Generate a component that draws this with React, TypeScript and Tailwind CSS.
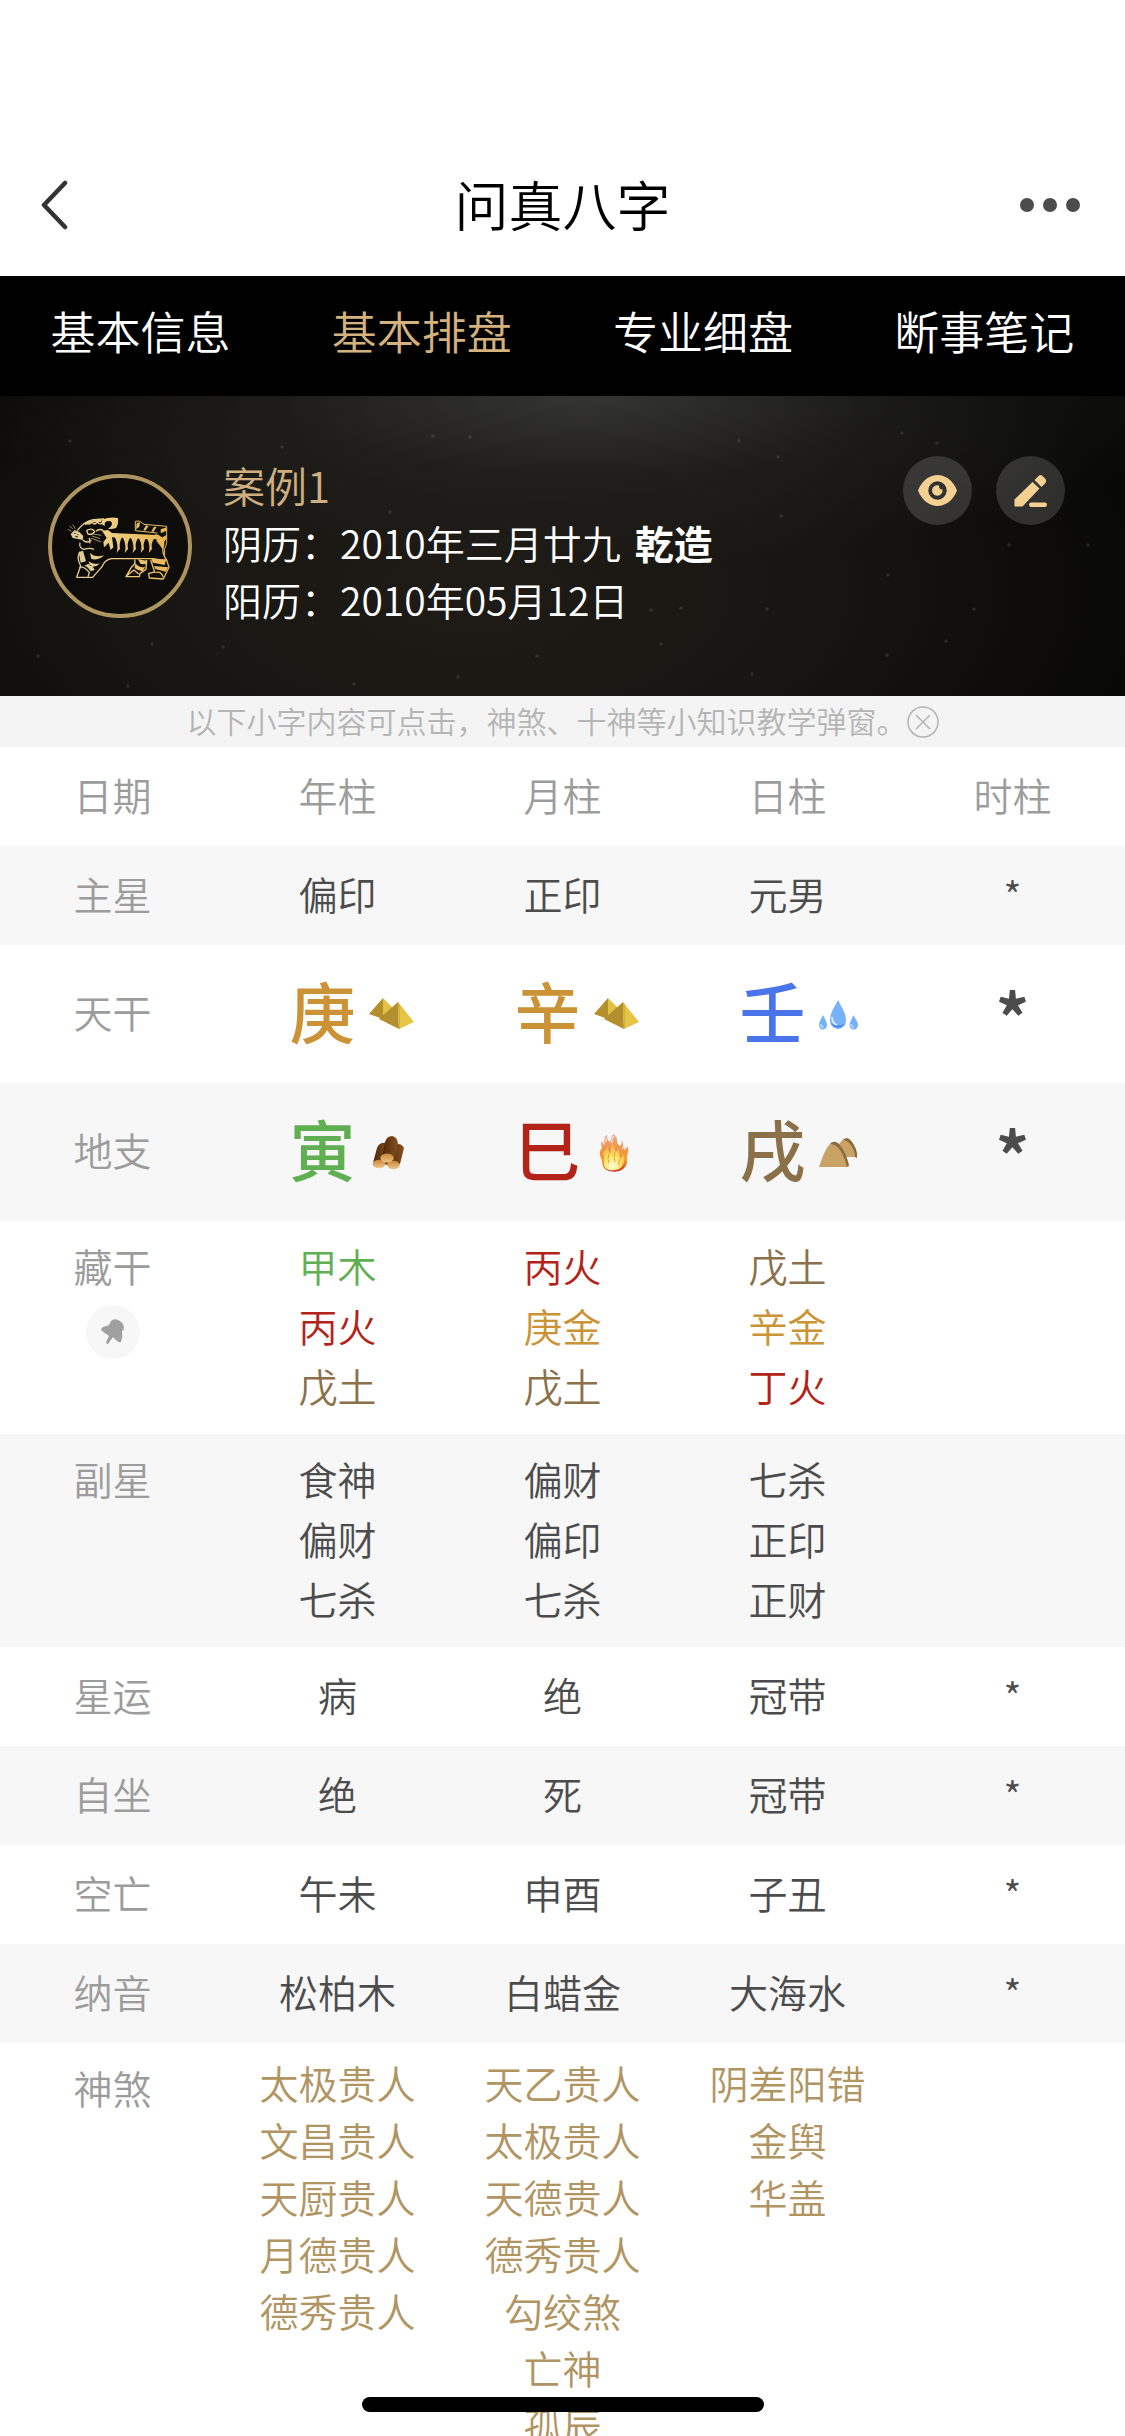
import clsx from "clsx"
import type { ReactNode } from "react"

const tabs = ["基本信息", "基本排盘", "专业细盘", "断事笔记"]

const specks = [
  [70, 441], [282, 447], [433, 436], [470, 437], [778, 457], [902, 433],
  [937, 443], [739, 441], [390, 512], [781, 516], [1009, 545], [1088, 545],
  [888, 575], [651, 610], [681, 608], [767, 609], [38, 656], [152, 644],
  [223, 647], [537, 656], [661, 644], [946, 641], [887, 655], [458, 677],
  [354, 684], [752, 674], [128, 686], [974, 609],
]

const GoldIcon = () => (
  <svg viewBox="0 0 45 45" className="size-[45px]" aria-hidden="true">
    <path d="M0 22 14 6 14 27Z" fill="#b3902d" />
    <path d="M14 6 25 17 17 28 14 27Z" fill="#e4c044" />
    <path d="M10 27 29 10 30 37Z" fill="#b3902d" />
    <path d="M29 10 45 30 30 37Z" fill="#e6c446" />
    <path d="M29 10 31 13 31 36.500 30 37Z" fill="#d2b03c" />
  </svg>
)

const WoodIcon = () => (
  <svg viewBox="0 0 45 45" className="size-[45px]" aria-hidden="true">
    <defs>
      <linearGradient id="bark" x1="0" x2="1">
        <stop offset="0" stopColor="#4d270c" />
        <stop offset="1" stopColor="#87501e" />
      </linearGradient>
      <linearGradient id="cut" x1="0" y1="0" x2="0" y2="1">
        <stop offset="0" stopColor="#c58438" />
        <stop offset="1" stopColor="#f0c68a" />
      </linearGradient>
    </defs>
    <path d="M4 33 8 18Q10 12 18 13L20 35Z" fill="url(#bark)" />
    <path d="M19 34 25 16Q31 11 35 18L31 34Z" fill="url(#bark)" />
    <path d="M13 27 16 12Q18 6 23 6 28 7 29 13L25 30Z" fill="url(#bark)" />
    <ellipse cx="10" cy="34" rx="6.300" ry="4.200" fill="url(#cut)" />
    <ellipse cx="24.500" cy="35" rx="6.300" ry="4.200" fill="url(#cut)" />
    <ellipse cx="18" cy="28" rx="6.600" ry="4.600" fill="url(#cut)" />
  </svg>
)

const WaterIcon = () => (
  <svg viewBox="0 0 45 45" className="size-[45px]" aria-hidden="true">
    <path d="M19 8C23 16 27 21 27 28.500A8 8.500 0 0 1 11 28.500C11 21 15 16 19 8Z" fill="#76b1fb" />
    <path d="M12 31A7.500 7 0 0 0 26 31 8 5 0 0 1 12 31Z" fill="#3f86dd" />
    <path d="M13 25Q13 31 18 33" fill="none" stroke="#d8eaff" strokeWidth="1.800" />
    <path d="M4 23C6 27 8 30 8 33A4 4.500 0 0 1 0 33C0 30 2 27 4 23Z" fill="#76b1fb" />
    <path d="M34.500 23C36.500 27 39 30 39 33A4.200 4.500 0 0 1 30.500 33C30.500 30 33 27 34.500 23Z" fill="#76b1fb" />
    <path d="M1.500 32Q2 35 4.500 35.500M32 32Q32.500 35 35 35.500" fill="none" stroke="#cfe4ff" strokeWidth="1.200" />
  </svg>
)

const FireIcon = () => (
  <svg viewBox="0 0 45 45" className="size-[45px]" aria-hidden="true">
    <defs>
      <linearGradient id="flame" x1="0" y1="0" x2="0" y2="1">
        <stop offset="0" stopColor="#e8a795" />
        <stop offset="0.400" stopColor="#ee9448" />
        <stop offset="0.700" stopColor="#f39a2b" />
        <stop offset="1" stopColor="#ce2a1c" />
      </linearGradient>
      <radialGradient id="core" cx="0.450" cy="0.850" r="0.750">
        <stop offset="0" stopColor="#fffde0" />
        <stop offset="0.450" stopColor="#fdea6c" />
        <stop offset="1" stopColor="#f5a848" />
      </radialGradient>
    </defs>
    <path
      d="M11 39C8 36 9 32 7 28 5 24 6 20 8 18 7 14 7 11 8 11 9 14 10 15 11 15 9 10 11 6 13 5 13 9 14 11 16 12 17 9 17 6 20 4 21 6 23 7 23 10 23 13 24 15 26 16 28 15 28 12 27 10 30 13 31 17 30 20 33 19 33 17 33 16 36 20 33 24 33 27 34 32 32 37 29 39 24 43 15 42 11 39Z"
      fill="url(#flame)"
    />
    <path d="M11 38C8 33 12 29 9 23 11 21 12 19 13 16 15 19 14 22 16 24 18 20 16 15 19 12 21 17 20 20 22 22 24 21 24 19 24 18 27 23 24 26 27 29 28 26 29 25 30 24 31 31 30 36 25 39 20 41 15 41 11 38Z" fill="url(#core)" />
    <path d="M18 13Q17 9 20 6M12 12V8M28 19Q31 16 29 13" fill="none" stroke="#fbe9e4" strokeWidth="1.200" />
    <path d="M15 24Q13 29 15 33M21 22Q19 27 21 32M26 29Q24 32 25 35" fill="none" stroke="#f19a3c" strokeWidth="1" />
  </svg>
)

const EarthIcon = () => (
  <svg viewBox="0 0 45 45" className="size-[45px]" aria-hidden="true">
    <path d="M20 14Q24 8 28 8C33 9 38 20 38 27H25Z" fill="#c9a365" />
    <path d="M24 10Q27 7 30 9C35 13 39 21 38 28L36 27C36 20 31 10 24 10Z" fill="#8c6a42" />
    <path d="M0 37C4 26 8 13 15 12 22 14 25 25 30 37Z" fill="#c9a365" />
    <path d="M11 14Q14 10 19 13C25 19 28 27 30 35L28 37C26 28 20 13 11 14Z" fill="#8c6a42" />
  </svg>
)

const TigerIcon = () => (
  <svg viewBox="24 42 432 432" className="size-full" aria-hidden="true">
    <defs>
      <linearGradient id="tiger" x1="100" y1="300" x2="380" y2="240" gradientUnits="userSpaceOnUse">
        <stop offset="0" stopColor="#dcc99c" />
        <stop offset="0.400" stopColor="#efcf86" />
        <stop offset="1" stopColor="#e6b450" />
      </linearGradient>
    </defs>
    <g fill="url(#tiger)">
      {/* ear and forehead */}
      <path d="M188 178Q210 170 234 174 236 194 228 204 216 208 204 206 216 200 216 190 214 180 200 184 190 190 196 198 186 196 184 188Z" />
      <path d="M132 190Q150 180 186 178L184 186Q150 184 136 196Z" />
      {/* muzzle */}
      <path d="M92 222 104 210 118 216 130 228 128 240 110 236 98 234Z" />
      {/* back with stripes hanging from it */}
      <path d="M186 212 204 210 216 219 352 225 358 236 336 238 216 232 220 262 212 270 206 248 192 262 190 246 200 234Z" />
      <path d="M224 230 246 232Q236 250 240 266L230 278Q237 256 224 230ZM248 231 270 233Q260 251 264 267L254 279Q261 256 248 231ZM272 232 294 234Q284 251 288 267L278 279Q285 256 272 232ZM296 233 318 235Q308 251 312 267L302 279Q309 256 296 233ZM320 234 342 236Q332 251 336 267L326 279Q333 256 320 234Z" />
      <path d="M346 222Q364 226 372 240 376 254 368 268 358 254 350 244Z" />
      {/* leg stripes */}
      <path d="M150 278Q164 294 192 286 178 302 154 297ZM146 304Q160 316 180 310 168 324 150 317ZM116 276 129 272 138 304 122 308ZM132 318Q142 318 152 334L164 330Q158 316 144 312Z" />
      <path d="M286 310Q300 326 316 320L308 334Q296 334 284 324ZM294 298 320 302 318 313 302 312ZM334 294 378 300 374 315 338 308ZM342 318 385 322 377 335 346 327Z" />
      {/* tail bands */}
      <path d="M290 190 300 186 298 200 288 208ZM318 196 326 198 316 212 310 210ZM342 200 350 201 340 216 334 213ZM362 208 380 202V212L362 220ZM360 236 380 224V236L368 250Z" />
    </g>
    <g fill="none" stroke="url(#tiger)" strokeWidth="4" strokeLinejoin="round">
      <path d="M112 212Q132 184 160 179L192 177M140 190Q148 196 156 186 162 198 172 186 180 196 190 188" />
      <path d="M140 212Q154 202 164 214 158 226 144 222ZM168 214Q178 204 190 212" />
      <path d="M94 214 84 208M98 206 88 198M106 206 98 194M156 228 180 236M152 234 184 246M160 222 184 226" strokeWidth="2" />
      <path d="M128 240Q142 252 154 240M120 248Q116 264 132 268 148 262 162 268M148 234 150 250" />
      <path d="M120 276Q108 290 122 318L110 352H158L186 320Q194 300 214 296H334Q350 300 380 300L387 322 370 357 328 354 326 340 344 336 332 300" />
      <path d="M118 322Q134 318 148 338L144 350M284 298Q288 312 274 322L258 350H298L300 340 318 328 320 300M262 346 282 330 296 342" />
      <path d="M346 338Q364 332 370 352M370 262Q364 280 380 300" />
      <path d="M352 219 286 212V184L298 183 312 193 380 199V250Q370 268 374 286" strokeWidth="3" />
    </g>
    <path d="M103 220H107M112 224H115M106 229 114 231M153 214H156" stroke="#15130e" strokeWidth="3" />
  </svg>
)

const PinIcon = () => (
  <svg viewBox="0 0 54 54" className="size-[54px]" aria-hidden="true">
    <path
      d="M25 16Q28 13 32 15 37 17 38 22 38 25 36 26 37 32 35 37 33 38 30 35L27 32 22 39Q19 39 21 35L23 31 16 26Q14 24 17 22 21 21 23 20Z"
      fill="#a0a0a0"
    />
  </svg>
)

type Pillar = {
  char: string
  color: string
  icon: () => ReactNode
}

const stems: Pillar[] = [
  { char: "庚", color: "text-[#cb9335]", icon: GoldIcon },
  { char: "辛", color: "text-[#cb9335]", icon: GoldIcon },
  { char: "壬", color: "text-[#4974ea]", icon: WaterIcon },
]

const branches: Pillar[] = [
  { char: "寅", color: "text-[#60af52]", icon: WoodIcon },
  { char: "巳", color: "text-[#b32318]", icon: FireIcon },
  { char: "戌", color: "text-[#8a714a]", icon: EarthIcon },
]

const elementColors: Record<string, string> = {
  木: "text-[#60af52]",
  火: "text-[#b32318]",
  土: "text-[#8a714a]",
  金: "text-[#cb9335]",
}

const hiddenStems = [
  ["甲木", "丙火", "戊土"],
  ["丙火", "庚金", "戊土"],
  ["戊土", "辛金", "丁火"],
  [],
]

const subStars = [
  ["食神", "偏财", "七杀"],
  ["偏财", "偏印", "七杀"],
  ["七杀", "正印", "正财"],
  [],
]

const spirits = [
  ["太极贵人", "文昌贵人", "天厨贵人", "月德贵人", "德秀贵人"],
  ["天乙贵人", "太极贵人", "天德贵人", "德秀贵人", "勾绞煞", "亡神", "孤辰"],
  ["阴差阳错", "金舆", "华盖"],
  [],
]

const RowLabel = ({ children, className }: { children: ReactNode; className: string }) => (
  <th scope="row" className={clsx("font-[350] text-[#9c9c9c]", className)}>
    {children}
  </th>
)

const TextRow = ({ label, cells, shaded }: { label: string; cells: string[]; shaded?: boolean }) => (
  <tr className={clsx("h-[99px]", shaded && "bg-[#f7f7f7]")}>
    <RowLabel className="pb-1.5">{label}</RowLabel>
    {cells.map((cell, i) => (
      <td key={i} className={cell === "*" ? "pb-1" : "pb-1.5"}>
        {cell}
      </td>
    ))}
  </tr>
)

const PillarRow = ({ label, pillars, shaded }: { label: string; pillars: Pillar[]; shaded?: boolean }) => (
  <tr className={clsx("h-[138px]", shaded && "bg-[#f7f7f7]")}>
    <RowLabel className="pb-1.5">{label}</RowLabel>
    {pillars.map((pillar) => (
      <td key={pillar.char} className="pl-7">
        <div className="flex items-center justify-center gap-[13px]">
          <span className={clsx("pb-2.5 text-[66px] leading-[90px] font-medium", pillar.color)}>
            {pillar.char}
          </span>
          <pillar.icon />
        </div>
      </td>
    ))}
    <td className="text-[66px] leading-[90px] font-bold">*</td>
  </tr>
)

const App = () => {
  return (
    <div className="flex h-screen flex-col overflow-hidden bg-white font-['Noto_Sans_CJK_SC',sans-serif] text-[39px] font-[350] text-[#4c4c4c]">
      <header className="grid shrink-0 grid-cols-[1fr_auto_1fr] items-center px-10 pt-[168px] pb-9 leading-[72px]">
        <button type="button" aria-label="返回" className="justify-self-start">
          <svg viewBox="0 0 30 50" className="h-[50px] w-[30px]" fill="none">
            <path d="M25 3 4 25 25 47" stroke="#333" strokeWidth="4.500" strokeLinecap="round" strokeLinejoin="round" />
          </svg>
        </button>
        <h1 className="pb-0.5 text-[54px] text-black">问真八字</h1>
        <button type="button" aria-label="更多" className="flex gap-[9px] justify-self-end pr-[5px]">
          <span className="size-3.5 rounded-full bg-[#4c4c4c]" />
          <span className="size-3.5 rounded-full bg-[#4c4c4c]" />
          <span className="size-3.5 rounded-full bg-[#4c4c4c]" />
        </button>
      </header>

      <nav className="-mt-0.5 grid h-[120px] shrink-0 grid-cols-4 bg-black pb-2.5 text-[45px]">
        {tabs.map((tab) => (
          <button
            key={tab}
            type="button"
            className={tab === "基本排盘" ? "text-[#d3b27d]" : "text-white"}
          >
            {tab}
          </button>
        ))}
      </nav>

      <section className="relative flex h-[300px] shrink-0 items-start bg-[#080807] bg-[radial-gradient(ellipse_55%_55%_at_52%_0%,#353532_0%,#24242188_50%,transparent_100%),radial-gradient(ellipse_60%_110%_at_42%_65%,#1f1c17_0%,#181612_50%,transparent_100%)] px-12 text-white">
        <svg viewBox="0 396 1125 300" preserveAspectRatio="none" className="absolute inset-0 size-full" aria-hidden="true">
          {specks.map(([x, y]) => (
            <circle key={`${x}-${y}`} cx={x} cy={y} r="1.800" fill="#fff" opacity="0.100" />
          ))}
        </svg>
        <div className="relative mt-[78px] size-36 shrink-0 rounded-full bg-black/40">
          <TigerIcon />
          <div className="absolute inset-0 rounded-full border-4 border-[#ae9460]" />
        </div>
        <div className="relative ml-[31px] flex-1 pt-[60px]">
          <h2 className="text-[42px] leading-[58px] text-[#cfae80]">案例1</h2>
          <p className="leading-[57px]">
            阴历：2010年三月廿九<strong className="ml-3.5 font-bold">乾造</strong>
          </p>
          <p className="leading-[57px]">阳历：2010年05月12日</p>
        </div>
        <div className="relative mt-[60px] mr-3 flex gap-6">
          <button type="button" aria-label="查看" className="size-[69px] rounded-full bg-white/15">
            <svg viewBox="0 0 69 69" className="size-full">
              <path d="M15 34.500C19 24 27 19 34.500 19S50 24 54 34.500C50 45 42 50 34.500 50S19 45 15 34.500Z" fill="#f4d093" />
              <circle cx="34.500" cy="34.500" r="9.200" fill="#31312f" />
              <path d="M36 29.500A5.300 5.300 0 1 0 39.500 33.500Q36 34 36 29.500Z" fill="#f4d093" />
            </svg>
          </button>
          <button type="button" aria-label="编辑" className="size-[69px] rounded-full bg-white/15">
            <svg viewBox="0 0 69 69" className="size-full" fill="#f4d093">
              <path d="M18.500 43.500 36.500 26 43.500 32.500 26.500 50.500H18.500Z" />
              <path d="M38.500 24 42.500 20Q44.500 18 46.500 20L49.500 23Q51 25 49.500 27L45.500 31Z" />
              <rect x="33" y="46.500" width="18" height="4.500" rx="2.250" />
            </svg>
          </button>
        </div>
      </section>

      <div className="flex h-[51px] shrink-0 items-center justify-center bg-[#f4f4f4] text-[30px] leading-[51px] text-[#b5b5b5]">
        <p className="pb-0.5">以下小字内容可点击，神煞、十神等小知识教学弹窗。</p>
        <button type="button" aria-label="关闭">
          <svg viewBox="0 0 32 32" className="size-8" fill="none" stroke="#b5b5b5" strokeWidth="1.500">
            <circle cx="16" cy="16" r="15" />
            <path d="M9 9 23 23M23 9 9 23" />
          </svg>
        </button>
      </div>

      <main className="min-h-0 flex-1 overflow-y-auto [scrollbar-width:none]">
        <table className="w-full table-fixed border-collapse text-center leading-[60px]">
          <thead>
            <tr className="h-[99px] text-[#9c9c9c]">
              {["日期", "年柱", "月柱", "日柱", "时柱"].map((head) => (
                <th key={head} scope="col" className="pb-1.5 font-[350]">
                  {head}
                </th>
              ))}
            </tr>
          </thead>
          <tbody>
            <TextRow label="主星" cells={["偏印", "正印", "元男", "*"]} shaded />
            <PillarRow label="天干" pillars={stems} />
            <PillarRow label="地支" pillars={branches} shaded />
            <tr className="h-[213px] align-top">
              <RowLabel className="pt-3.5">
                藏干
                <button type="button" aria-label="固定" className="mx-auto mt-2.5 block rounded-full bg-[#f7f7f7]">
                  <PinIcon />
                </button>
              </RowLabel>
              {hiddenStems.map((items, i) => (
                <td key={i} className="pt-3.5">
                  {items.map((item) => (
                    <div key={item} className={elementColors[item[1]]}>
                      {item}
                    </div>
                  ))}
                </td>
              ))}
            </tr>
            <tr className="h-[213px] bg-[#f7f7f7] align-top">
              <RowLabel className="pt-3.5">副星</RowLabel>
              {subStars.map((items, i) => (
                <td key={i} className="pt-3.5">
                  {items.map((item) => (
                    <div key={item}>{item}</div>
                  ))}
                </td>
              ))}
            </tr>
            <TextRow label="星运" cells={["病", "绝", "冠带", "*"]} />
            <TextRow label="自坐" cells={["绝", "死", "冠带", "*"]} shaded />
            <TextRow label="空亡" cells={["午未", "申酉", "子丑", "*"]} />
            <TextRow label="纳音" cells={["松柏木", "白蜡金", "大海水", "*"]} shaded />
            <tr className="align-top">
              <RowLabel className="pt-3.5">神煞</RowLabel>
              {spirits.map((items, i) => (
                <td key={i} className="pt-[11px] leading-[57px] text-[#b09562]">
                  {items.map((item) => (
                    <div key={item}>{item}</div>
                  ))}
                </td>
              ))}
            </tr>
          </tbody>
        </table>
      </main>

      <div className="fixed bottom-6 left-1/2 h-[15px] w-[402px] -translate-x-1/2 rounded-full bg-black" />
    </div>
  )
}

export default App
